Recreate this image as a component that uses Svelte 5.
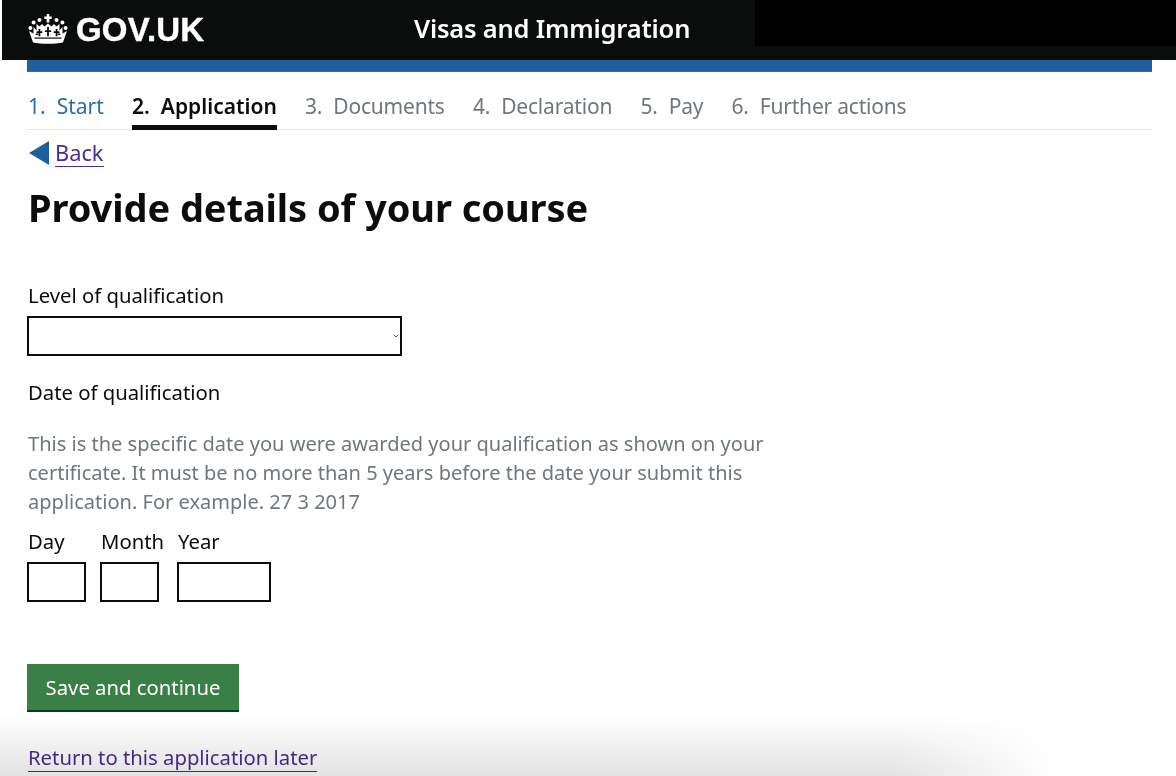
<script lang="ts">
	type Step = { readonly num: string; readonly label: string; readonly state: 'done' | 'current' | 'todo' };

	const steps: readonly Step[] = [
		{ num: '1.', label: 'Start', state: 'done' },
		{ num: '2.', label: 'Application', state: 'current' },
		{ num: '3.', label: 'Documents', state: 'todo' },
		{ num: '4.', label: 'Declaration', state: 'todo' },
		{ num: '5.', label: 'Pay', state: 'todo' },
		{ num: '6.', label: 'Further actions', state: 'todo' }
	];
</script>

<div class="page">
	<header class="top">
		<div class="brand">
			<svg class="crown" viewBox="0 0 40 30" width="40" height="30" aria-hidden="true">
				<g fill="#fff">
					<path d="M18.7 0h2.6v2.400h2.400v2.600h-2.400v3.500h-2.600V5h-2.400V2.400h2.400z" />
					<circle cx="2.400" cy="14" r="2" />
					<circle cx="5.600" cy="8.500" r="2" />
					<circle cx="11.500" cy="6" r="2" />
					<circle cx="28.500" cy="6" r="2" />
					<circle cx="34.400" cy="8.500" r="2" />
					<circle cx="37.600" cy="14" r="2" />
					<path d="M1 17l4.500 2.500V13l3 3.500V10l3 2.500L14 10l2.500 2.500L20 9.500l3.500 3L26 10l2.500 2.500 3-2.500v6.500l3-3.500v6.500L39 17l-4 11.500c-9 1.800-21 1.800-30 0z" />
				</g>
				<g fill="#0b0c0c">
					<path d="M7.800 19.500h2.400v1.500H7.800zM29.800 19.500h2.400v1.500h-2.400z" />
					<path d="M10.500 15h1.800v2.300h2v1.700h-2v3.200h-1.800V19h-2v-1.700h2zM19.100 13h1.800v3.300h2.200V18h-2.200v4.200h-1.800V18h-2.200v-1.700h2.200zM27.700 15h1.800v2.300h2v1.700h-2v3.200h-1.800V19h-2v-1.700h2z" />
					<path d="M6.500 23.500h27v1.200h-27z" />
				</g>
			</svg>
			<span class="wordmark">GOV.UK</span>
		</div>
		<div class="service">Visas and Immigration</div>
		<div class="redacted"></div>
	</header>
	<div class="blue-bar"></div>

	<main class="content">
		<nav class="steps" aria-label="Application progress">
			{#each steps as step}
				<span class={`step ${step.state}`}><span class="num">{step.num}</span>{step.label}</span>
			{/each}
		</nav>

		<a class="back" href="#back">
			<span class="back-arrow"></span>
			<span class="link">Back</span>
		</a>

		<h1>Provide details of your course</h1>

		<label class="field-label" for="level">Level of qualification</label>
		<div class="select-wrap">
			<select id="level" class="level"></select>
			<svg class="chevron" viewBox="0 0 6 4" width="6" height="4" aria-hidden="true">
				<path d="M0.800 0.800L3 3l2.200-2.200" fill="none" stroke="#555" stroke-width="1" />
			</svg>
		</div>

		<p class="field-label date-label">Date of qualification</p>
		<p class="hint">
			This is the specific date you were awarded your qualification as shown on your certificate. It must be no more than 5 years before the date your submit this application. For example. 27 3 2017
		</p>

		<div class="date-row">
			<div class="date-item">
				<label for="day">Day</label>
				<input id="day" class="day" type="text" />
			</div>
			<div class="date-item">
				<label for="month">Month</label>
				<input id="month" class="month" type="text" />
			</div>
			<div class="date-item">
				<label for="year">Year</label>
				<input id="year" class="year" type="text" />
			</div>
		</div>

		<button class="save" type="button">Save and continue</button>

		<a class="later link" href="#later">Return to this application later</a>
	</main>

	<div class="shade"></div>
</div>

<style>
	:global(body) {
		margin: 0;
		background: #fff;
	}

	.page {
		position: relative;
		width: 1176px;
		height: 776px;
		overflow: hidden;
		font-family: 'Noto Sans', 'Open Sans', sans-serif;
		color: #0b0c0c;
	}

	.top {
		display: flex;
		align-items: flex-start;
		height: 60px;
		margin-left: 2px;
		background: #0b0c0c;
		color: #fff;
	}

	.brand {
		display: flex;
		align-items: center;
		gap: 8px;
		width: 412px;
		height: 60px;
		padding-left: 26px;
		box-sizing: border-box;
	}

	.crown {
		margin-bottom: 2px;
	}

	.wordmark {
		font-family: 'Liberation Sans', Arial, sans-serif;
		font-size: 33px;
		font-weight: 700;
		letter-spacing: 0.2px;
		-webkit-text-stroke: 0.4px #fff;
	}

	.service {
		width: 341px;
		line-height: 57px;
		font-size: 25.500px;
		font-weight: 600;
		letter-spacing: -0.2px;
	}

	.redacted {
		flex: 1;
		height: 46px;
		background: #000;
	}

	.blue-bar {
		height: 11px;
		margin: 0 24px 0 27px;
		background: #1f5e9f;
		border-bottom: 1px solid #1d70b8;
		box-sizing: content-box;
	}

	.content {
		padding: 0 24px 0 28px;
	}

	.steps {
		display: flex;
		gap: 28.250px;
		height: 58px;
		margin-left: -1px;
		padding-left: 1px;
		border-bottom: 1px solid #e6e7e7;
		box-sizing: border-box;
		font-size: 21px;
		color: #6f777b;
	}

	.step {
		height: 58px;
		line-height: 69px;
		box-sizing: border-box;
		white-space: nowrap;
	}

	.num {
		margin-right: 11px;
	}

	.done {
		color: #2b6cb0;
	}

	.current {
		color: #0b0c0c;
		font-weight: 600;
		border-bottom: 5px solid #0b0c0c;
	}

	.todo {
		letter-spacing: -0.2px;
	}

	.back {
		display: flex;
		align-items: center;
		gap: 6px;
		height: 38px;
		width: fit-content;
		margin-top: 4px;
		font-size: 21.800px;
		text-decoration: none;
	}

	.back-arrow {
		width: 0;
		height: 0;
		margin-left: 1px;
		border-top: 12px solid transparent;
		border-bottom: 12px solid transparent;
		border-right: 20px solid #1f5e9f;
	}

	.link {
		color: #4c2c92;
		text-decoration: none;
		border-bottom: 1.500px solid #4c2c92;
		line-height: 27px;
	}

	h1 {
		margin: 10px 0 0;
		font-size: 38px;
		line-height: 50px;
		font-weight: 700;
		letter-spacing: -0.07px;
	}

	.field-label,
	label {
		display: block;
		margin: 0;
		font-size: 20.300px;
		line-height: 28px;
	}

	label.field-label {
		margin-top: 49px;
	}

	.select-wrap {
		position: relative;
		width: 375px;
		margin: 7px 0 0 -1px;
	}

	.level {
		display: block;
		width: 375px;
		height: 40px;
		border: 2px solid #0b0c0c;
		border-radius: 0;
		background: #fff;
		appearance: none;
	}

	.chevron {
		position: absolute;
		right: 3px;
		top: 18px;
	}

	.date-label {
		margin-top: 22px;
	}

	.hint {
		width: 770px;
		margin: 23px 0 0;
		font-size: 20.050px;
		line-height: 29px;
		color: #6f777b;
	}

	.date-row {
		display: flex;
		gap: 15px;
		margin: 11px 0 0 -1px;
	}

	.date-item label {
		margin-bottom: 7px;
		padding-left: 1px;
	}

	input {
		display: block;
		height: 40px;
		padding: 0;
		border: 2px solid #0b0c0c;
		box-sizing: border-box;
		border-radius: 0;
	}

	.day,
	.month {
		width: 59px;
	}

	.date-item:first-child {
		width: 58px;
	}

	.date-item:nth-child(2) {
		width: 62px;
	}

	.year {
		width: 94px;
	}

	.save {
		display: block;
		width: 212px;
		height: 48px;
		margin: 62px 0 0 -1px;
		padding: 0;
		border: 0;
		border-bottom: 2px solid #00401e;
		background: #3a7f46;
		color: #fff;
		font-family: inherit;
		font-size: 20.300px;
	}

	.later {
		display: inline-block;
		margin-top: 32px;
		font-size: 20.300px;
	}

	.shade {
		position: absolute;
		left: 0;
		right: 0;
		bottom: 0;
		height: 62px;
		pointer-events: none;
		background: linear-gradient(to bottom, rgba(225, 225, 225, 0), rgba(225, 225, 225, 0.95));
		mask-image: linear-gradient(to right, #000 76%, transparent 90%);
		mix-blend-mode: multiply;
	}
</style>
